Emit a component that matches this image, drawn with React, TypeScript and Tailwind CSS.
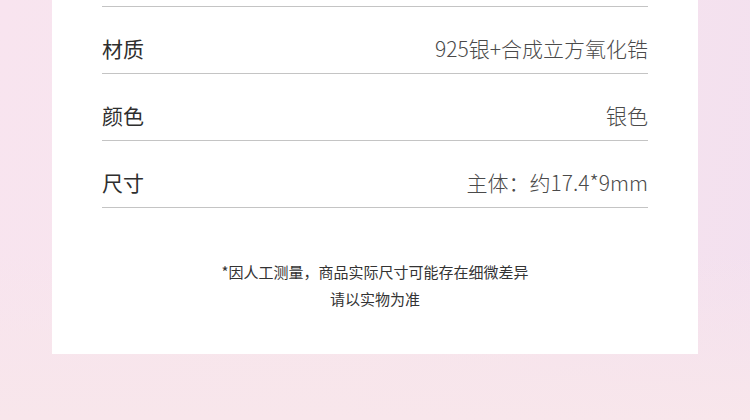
import React from "react";

const specs = [
  { label: "材质", value: "925银+合成立方氧化锆" },
  { label: "颜色", value: "银色" },
  { label: "尺寸", value: "主体：约17.4*9mm" },
];

const App: React.FC = () => {
  return (
    <div
      className="w-[750px] h-[420px] overflow-hidden px-[52px] bg-[linear-gradient(180deg,rgba(247,230,236,0)_60%,#f8e6eb_100%),linear-gradient(100deg,#f8e4ef_0%,#f7e5ed_50%,#f3e0ef_100%)]"
      style={{ fontFamily: '"Noto Sans CJK SC", "Noto Sans", sans-serif' }}
    >
      <div className="bg-white h-[354px] px-[50px] pt-[6px]">
        <div className="border-t border-[#c4c4c4]">
          {specs.map((item) => (
            <div
              key={item.label}
              className="flex justify-between items-center pt-[31px] pb-[14px] leading-[21px] border-b border-[#c4c4c4]"
            >
              <span className="text-[21px] text-[#2e2e2e]">{item.label}</span>
              <span className="text-[21px] font-light text-[#4a4a4a]">{item.value}</span>
            </div>
          ))}
        </div>
        <div className="mt-[50px] text-center text-[15px] leading-[27px] text-[#333333]">
          <p>*因人工测量，商品实际尺寸可能存在细微差异</p>
          <p>请以实物为准</p>
        </div>
      </div>
    </div>
  );
};

export default App;
